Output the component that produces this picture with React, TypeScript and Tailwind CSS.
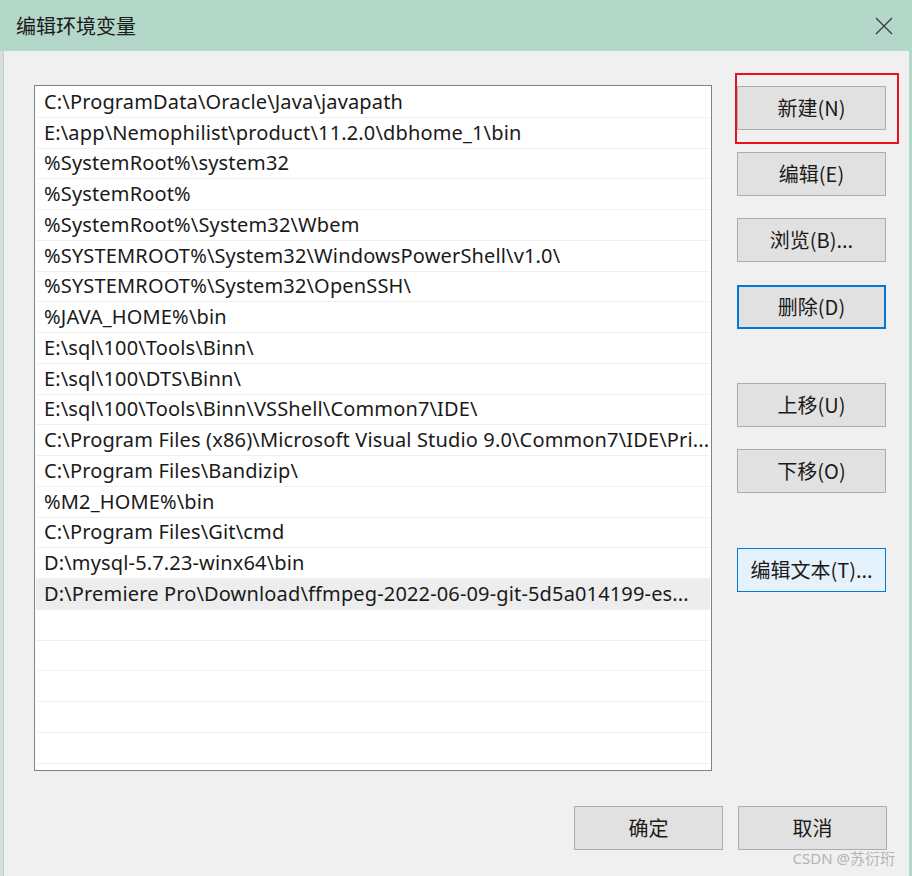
const paths = [
  "C:\\ProgramData\\Oracle\\Java\\javapath",
  "E:\\app\\Nemophilist\\product\\11.2.0\\dbhome_1\\bin",
  "%SystemRoot%\\system32",
  "%SystemRoot%",
  "%SystemRoot%\\System32\\Wbem",
  "%SYSTEMROOT%\\System32\\WindowsPowerShell\\v1.0\\",
  "%SYSTEMROOT%\\System32\\OpenSSH\\",
  "%JAVA_HOME%\\bin",
  "E:\\sql\\100\\Tools\\Binn\\",
  "E:\\sql\\100\\DTS\\Binn\\",
  "E:\\sql\\100\\Tools\\Binn\\VSShell\\Common7\\IDE\\",
  "C:\\Program Files (x86)\\Microsoft Visual Studio 9.0\\Common7\\IDE\\Pri...",
  "C:\\Program Files\\Bandizip\\",
  "%M2_HOME%\\bin",
  "C:\\Program Files\\Git\\cmd",
  "D:\\mysql-5.7.23-winx64\\bin",
  "D:\\Premiere Pro\\Download\\ffmpeg-2022-06-09-git-5d5a014199-es...",
];

const font = { fontFamily: '"Noto Sans", "Noto Sans CJK SC", sans-serif' };
const cjk = { fontFamily: '"Noto Sans CJK SC", sans-serif' };

// plain win10 button
const WinButton = ({
  label,
  variant = "normal",
  className = "",
}: {
  label: string;
  variant?: "normal" | "focus" | "hover";
  className?: string;
}) => {
  const look =
    variant === "focus"
      ? "bg-[#e1e1e1] border-2 border-[#0078d7]"
      : variant === "hover"
      ? "bg-[#e5f1fb] border border-[#0078d7]"
      : "bg-[#e1e1e1] border border-[#adadad]";
  return (
    <div
      className={`w-[149px] h-[44px] flex items-center justify-center text-[20px] text-[#1a1a1a] ${look} ${className}`}
    >
      {label}
    </div>
  );
};

export default function App() {
  const emptyRows = 5;
  return (
    <div
      className="w-[912px] h-[876px] flex flex-col bg-[#f0f0f0] overflow-hidden"
      style={font}
    >
      {/* title bar */}
      <div className="h-[51px] shrink-0 bg-[#b3d7c9] flex items-center justify-between pl-[16px] pr-[19px]">
        <span className="text-[20px] text-[#1a1a1a]" style={cjk}>
          编辑环境变量
        </span>
        <svg width="18" height="18" viewBox="0 0 18 18">
          <path d="M1 1 L17 17 M17 1 L1 17" stroke="#3a3a3a" strokeWidth="1.3" />
        </svg>
      </div>

      <div className="flex flex-1">
        {/* window behind, peeking at the left */}
        <div className="w-[3px] bg-[#dcdcdc]" />
        <div className="w-[1px] bg-[#b3d7c9]" />

        {/* dialog body */}
        <div className="flex-1 flex flex-col pl-[30px] pt-[34px]">
          <div className="flex gap-[25px]">
            {/* path list */}
            <div className="w-[678px] h-[686px] bg-white border border-[#828282] p-[1px] overflow-hidden">
              {paths.map((p, i) => (
                <div
                  key={i}
                  className={`h-[30.75px] flex items-center pl-[8px] pr-[4px] border-b border-[#f0f0f0] text-[20px] tracking-[0.15px] text-[#1a1a1a] whitespace-nowrap overflow-hidden ${
                    i === paths.length - 1 ? "bg-[#ededed]" : ""
                  }`}
                >
                  {p}
                </div>
              ))}
              {Array.from({ length: emptyRows }).map((_, i) => (
                <div key={`e${i}`} className="h-[30.75px] border-b border-[#f0f0f0]" />
              ))}
            </div>

            {/* action buttons */}
            <div className="flex flex-col pt-[1px]" style={cjk}>
              <div className="relative">
                <WinButton label="新建(N)" />
                <div className="absolute left-[-2px] top-[-13px] w-[164px] h-[71px] border-2 border-[#e8121c]" />
              </div>
              <WinButton label="编辑(E)" className="mt-[22px]" />
              <WinButton label="浏览(B)..." className="mt-[22px]" />
              <WinButton label="删除(D)" variant="focus" className="mt-[23px]" />
              <WinButton label="上移(U)" className="mt-[54px]" />
              <WinButton label="下移(O)" className="mt-[22px]" />
              <WinButton label="编辑文本(T)..." variant="hover" className="mt-[55px]" />
            </div>
          </div>

          {/* footer */}
          <div className="flex justify-end gap-[15px] mt-[35px] pr-[22px]" style={cjk}>
            <WinButton label="确定" />
            <WinButton label="取消" />
          </div>
          <div className="flex justify-end pr-[14px] mt-[1px] text-[15px] text-[#b4b4b4] leading-none">
            CSDN @苏衍珩
          </div>
        </div>

        <div className="w-[3px] bg-[#b3d7c9]" />
      </div>
    </div>
  );
}
